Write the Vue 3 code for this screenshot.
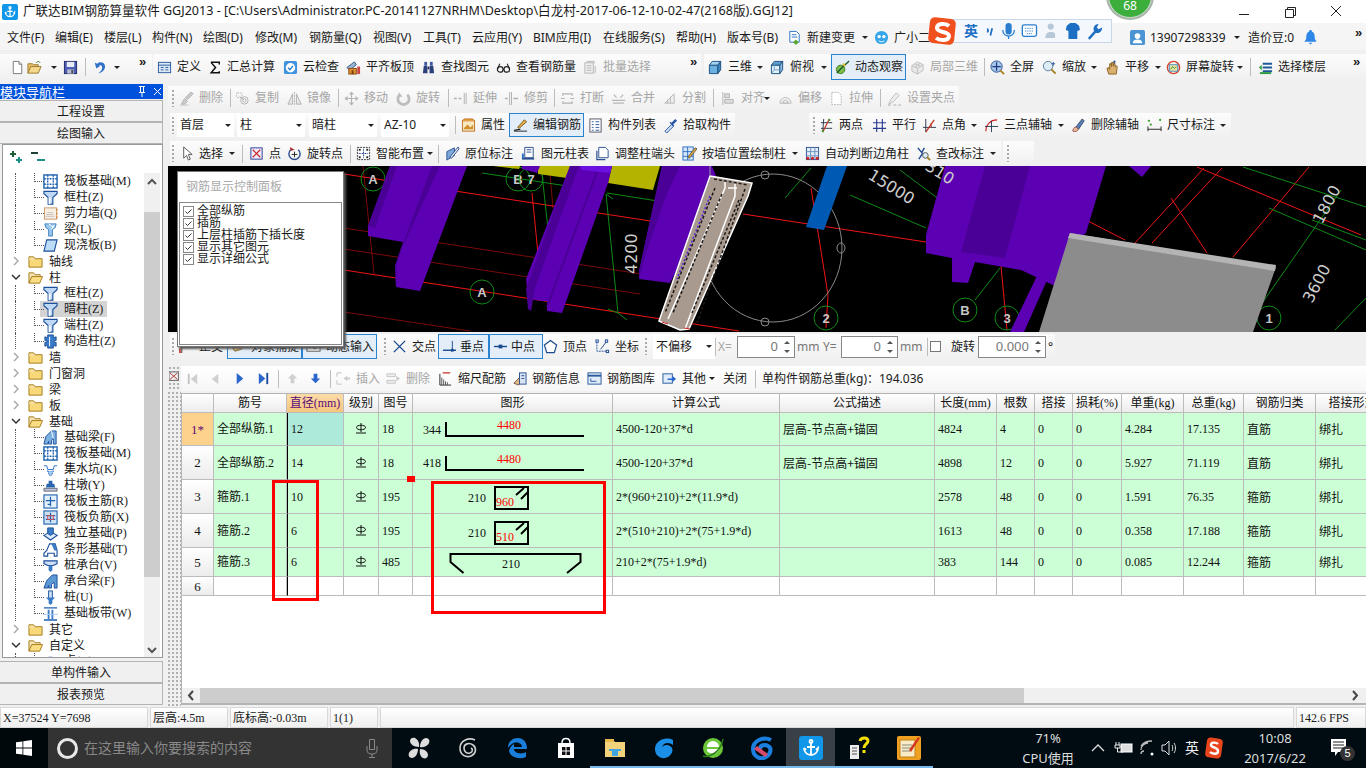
<script setup>
import { h } from 'vue'

// small icons, all drawn on a 16x16 box
const icons = {
  new: '<path d="M3.5 1.5h6l3 3v10h-9z" fill="#fff" stroke="#777"/><path d="M9.5 1.5v3h3" fill="#ddd" stroke="#777"/>',
  open: '<path d="M1 14V4h5l1 1h5v2" fill="#e8c068" stroke="#9a7a30"/><path d="M1 14l3-7h11l-3 7z" fill="#f4d98c" stroke="#9a7a30"/><path d="M10 3c1-2 3-2 4 0" fill="none" stroke="#3a7a30"/>',
  save: '<rect x="1.5" y="1.5" width="13" height="13" fill="#4a5cb4" stroke="#222a66"/><rect x="4" y="2" width="8" height="5.5" fill="#e8ecf8"/><rect x="4.5" y="10" width="7" height="4.5" fill="#b8bcd0"/><rect x="9" y="10.5" width="1.5" height="3.5" fill="#333"/>',
  undo: '<path d="M3 3l1.5 6L9 6 7 5.4c3-.8 5 1.6 3 5.6l-3 3.5c6-2 8-6 6.4-9.6C12 2 8 1.8 5.6 3.9z" fill="#2f72c8"/>',
  def: '<rect x="1.5" y="2.5" width="13" height="11" fill="#dbe8f6" stroke="#2a5a9c"/><path d="M1.5 5.5h13M4 8h3M4 10.5h3M9 8h3M9 10.5h3" stroke="#2a5a9c"/>',
  sum: '<path d="M3 2.5h9v2.4M12 12v1.5H3.4L8 8 3.4 2.8" fill="none" stroke="#111" stroke-width="1.6"/>',
  cloud: '<rect x="1" y="1" width="14" height="14" rx="2" fill="#3f93e0"/><circle cx="8" cy="8.3" r="5" fill="#fff"/><path d="M5.4 8.3l2 2 3.2-4" fill="none" stroke="#2a7acc" stroke-width="1.5"/>',
  flat: '<path d="M1 8l8-6 2 3-7 6z" fill="#9ab4d4" stroke="#36597f"/><rect x="3" y="9" width="8" height="6" fill="#e09030" stroke="#8a4a10"/><path d="M6 11h2v4H6z" fill="#7a3a10"/><rect x="12" y="7" width="3" height="8" fill="#c44"/>',
  find: '<path d="M2 14l1-8h3.600l.4 8zM9 14l.4-8H13l1 8z" fill="#2a3f7c"/><rect x="3.500" y="2" width="3" height="4" fill="#3f5aa0"/><rect x="9.500" y="2" width="3" height="4" fill="#3f5aa0"/><rect x="7" y="7" width="2" height="3" fill="#1c2a55"/>',
  view: '<circle cx="4.500" cy="10" r="3" fill="none" stroke="#222" stroke-width="1.3"/><circle cx="11.500" cy="10" r="3" fill="none" stroke="#222" stroke-width="1.3"/><path d="M7.500 10h1M2 9l2-5M14 9l-2-5" stroke="#222" stroke-width="1.100"/>',
  batch: '<rect x="2" y="3" width="9" height="11" fill="#eee" stroke="#b5b5b5"/><path d="M4 1.500h8v2M4 6h5M4 8.500h5M4 11h5M13 6v8" stroke="#b5b5b5" fill="none"/>',
  cube: '<path d="M1.500 5.500v9h9v-9z" fill="#6ab0e0" stroke="#1d4f80"/><path d="M1.500 5.500l3-4h9l-3 4z" fill="#a4d4f0" stroke="#1d4f80"/><path d="M10.500 5.500l3-4v9l-3 4z" fill="#3f88c4" stroke="#1d4f80"/>',
  cubet: '<path d="M1.500 5.500v9h9v-9z" fill="#e4f0f8" stroke="#1d4f80"/><path d="M1.500 5.500l3-4h9l-3 4z" fill="#5e9ccc" stroke="#1d4f80"/><path d="M10.500 5.500l3-4v9l-3 4z" fill="#8abde0" stroke="#1d4f80"/><path d="M4.500 1.500v9l-3 4M4.500 10.500h9" fill="none" stroke="#6a9cc4"/>',
  orbit: '<ellipse cx="6" cy="10" rx="4.500" ry="4.500" fill="#7cc04a" stroke="#3a7a20"/><path d="M2 14C6 9 10 6 15 1" stroke="#1c5a30" stroke-width="1.500"/><path d="M9 3l3 3-2 1-2-2z" fill="#e8c030"/>',
  local: '<path d="M2 6l6-4 6 3v6l-6 4-6-3z" fill="#e8e8e8" stroke="#c0c0c0"/><path d="M2 6l6 3 6-4M8 9v6M5 4l6 3M11 3.500L5 8" fill="none" stroke="#c0c0c0"/>',
  full: '<circle cx="7" cy="7" r="6" fill="#a8c8ec" stroke="#2a4f90"/><path d="M7 2.500v9M2.500 7h9" stroke="#1e3a80" stroke-width="1.300"/><path d="M11 11l4 4" stroke="#b08020" stroke-width="2"/>',
  zoom: '<circle cx="6.500" cy="6.500" r="5" fill="#dcecf8" stroke="#5a7a90"/><path d="M10 10l4.500 4.500" stroke="#a08020" stroke-width="2"/><path d="M12 2v4M10 4h4" stroke="#2a5aa0"/>',
  pan: '<path d="M4 15l-2-6 2-1 1 2V4l1.500 0 .5 3V2.500h1.500l.5 4V3.500h1.500l.5 4 1-1.500 1 1-1 8z" fill="#d8b070" stroke="#8a6020"/><path d="M10 .5v3M8.500 2h3" stroke="#2a4a90"/>',
  rot: '<circle cx="8" cy="8" r="6.500" fill="none" stroke="#d8402a" stroke-width="1.500"/><rect x="3.500" y="5" width="9" height="7" fill="#e8e0a0" stroke="#4a90c0"/><path d="M5 10l2-3 2 2 2-2" stroke="#3a9a3a" fill="none"/>',
  floors: '<path d="M5 4h10M5 8h10M5 12h10" stroke="#1d5a9c" stroke-width="2"/><path d="M1 8l3-3v6z" fill="#2a9a3a"/><path d="M2 14h12" stroke="#2a9a3a" stroke-width="2"/>',
  doc: '<path d="M3 1.500h7l3 3V13H3z" fill="#fff" stroke="#2a6fc4"/><path d="M5 5h5M5 7.500h6" stroke="#2a6fc4"/><path d="M9.500 10l3 3-3 3-3-3z" fill="#58a82a"/>',
  xiao: '<ellipse cx="8" cy="8" rx="7" ry="7" fill="#35a6e8"/><circle cx="5.500" cy="7" r="1.800" fill="#fff"/><circle cx="10.500" cy="7" r="1.800" fill="#fff"/><path d="M5 11.500c2 1.500 4 1.500 6 0" stroke="#fff" fill="none"/>',
  user: '<rect x="0" y="0" width="16" height="16" rx="2" fill="#4a94d4"/><circle cx="8" cy="6.500" r="3" fill="#fff"/><path d="M3 14c0-3 2-4 5-4s5 1 5 4z" fill="#fff"/>',
  bell: '<path d="M8 0c1 0 1.500.7 1.500 1.500C12 2.500 12.500 5 12.500 8c0 2 1 3 2 4.500H1.500c1-1.500 2-2.500 2-4.500 0-3 .5-5.500 3-6.500C6.500.7 7 0 8 0z" fill="#2d86e8"/><path d="M6 13.500h4L8 15.500z" fill="#2d86e8"/>',
  del: '<path d="M3 13l3-5 3 3-3 3H3zM7 7l6-6 2 2-6 6z" fill="#ccc" stroke="#b0b0b0"/><path d="M1 15h9" stroke="#c0c0c0"/>',
  copy: '<rect x="1.500" y="2" width="6" height="5" rx="1" fill="none" stroke="#b8b8b8" stroke-dasharray="2 1"/><circle cx="10" cy="10" r="4" fill="none" stroke="#b0b0b0"/><circle cx="10" cy="10" r="1.800" fill="none" stroke="#b0b0b0"/><path d="M5 6l4 3" stroke="#b0b0b0"/>',
  mirror: '<path d="M8 1v14" stroke="#b0b0b0" stroke-dasharray="2 1"/><path d="M6 3v11H1zM10 3v11h5z" fill="#e8e8e8" stroke="#b0b0b0"/>',
  move: '<path d="M8 1v14M1 8h14M8 1L6 4M8 1l2 3M8 15l-2-3M8 15l2-3M1 8l3-2M1 8l3 2M15 8l-3-2M15 8l-3 2" fill="none" stroke="#b4b4b4" stroke-width="1.200"/>',
  rotate: '<path d="M4 4a6 6 0 1 0 8 0" fill="none" stroke="#bdbdbd" stroke-width="3"/><path d="M3 1v5h4" fill="#bdbdbd"/>',
  extend: '<path d="M1 8h3M6 8h3" stroke="#b0b0b0" stroke-width="1.500"/><path d="M12 2v12M14 2v12" stroke="#b0b0b0"/>',
  trim: '<path d="M8 1v14M6 1v14" stroke="#b0b0b0"/><path d="M1 8h3M10 8h5" stroke="#b0b0b0" stroke-width="1.500"/>',
  brk: '<path d="M1 8h4M11 8h4M3 5V3h10v2M3 11v2h10v-2" fill="none" stroke="#b4b4b4" stroke-width="1.300"/>',
  merge: '<path d="M1 10h14M3 4l3 3M13 4l-3 3M2 13h12" fill="none" stroke="#b8b8b8" stroke-width="1.300"/>',
  split: '<path d="M3 13L13 3v10zM6 13V9M9 13V6" fill="#eee" stroke="#b8b8b8"/>',
  align: '<path d="M2 1v14" stroke="#b0b0b0"/><path d="M4 3h5v4H4zM4 9h9v4H4z" fill="#ddd" stroke="#b0b0b0"/>',
  offs: '<path d="M2 13a6 6 0 1 1 12 0zM5 13a3 3 0 1 1 6 0z" fill="#eee" stroke="#bbb"/>',
  stret: '<path d="M3 1.500h7l3 3v10H3z" fill="#fff" stroke="#b8b8b8" stroke-dasharray="2 1"/>',
  grp: '<path d="M2 14l2-5 6-7 3 3-7 7z" fill="#eee" stroke="#bbb"/><path d="M1 15h3M7 15h3M12 15h3" stroke="#aaa"/>',
  attr: '<rect x="1.500" y="3" width="13" height="11" fill="#f8e8c0" stroke="#c07020"/><path d="M1.500 3l2-2h9l2 2" fill="#e8a040" stroke="#c07020"/><path d="M3 11l4-4 3 3 3-3v5H3z" fill="#d09030"/>',
  edit: '<path d="M1 13c3 0 5-1 7-1" fill="none" stroke="#222" stroke-width="1.200"/><path d="M5 10L12 2l2.500 2-8 7z" fill="#e8b850" stroke="#7a5010"/><path d="M1 14h14" stroke="#222"/>',
  list: '<rect x="2" y="1" width="12" height="14" fill="#fff" stroke="#556"/><path d="M4 4h2M4 7h2M4 10h2M4 13h2M8 4h4M8 7h4M8 10h4M8 13h4" stroke="#2a5a9c"/>',
  pick: '<path d="M2 14l7-7 2 2-7 7z" fill="#cde" stroke="#2a5aa8"/><path d="M9 5l4-4 2 2-4 4 1 1-1 1-4-4 1-1z" fill="#2a5aa8"/>',
  two: '<path d="M2 5h12M2 11h12M5 1l-1 14" stroke="#2a3a50"/><path d="M11 1L4 15" stroke="#c03020" stroke-width="1.300"/><circle cx="11" cy="2" r="1.200" fill="#3aa030"/><circle cx="4" cy="14" r="1.200" fill="#3aa030"/>',
  para: '<path d="M1 5h14M1 11h14M5 1v14M11 1v14" stroke="#2a3a90" stroke-width="1.200"/>',
  ang: '<path d="M1 10h14M4 1v14" stroke="#2a3a50"/><path d="M13 2L4 15" stroke="#c03020" stroke-width="1.300"/><path d="M10 10c0-2-.5-3-1-4" stroke="#c03020" fill="none"/>',
  arc: '<path d="M2 14C2 7 7 2 14 2" fill="none" stroke="#d02020" stroke-width="1.200"/><path d="M1 9h14M8 3v12" stroke="#2a3a50"/>',
  eras: '<path d="M5 10l7-9 2 2-6 9z" fill="#5a80c0" stroke="#345"/><path d="M2 14c0-3 2-5 4-4l2 2c-1 2-3 3-6 2z" fill="#e8b898" stroke="#955"/>',
  dim: '<path d="M1 9v5M15 9v5M1 12h14" stroke="#222"/><circle cx="4" cy="7" r="1.200" fill="#3aa030"/><circle cx="14" cy="2" r="1.200" fill="#3aa030"/><circle cx="2" cy="3" r="1.200" fill="#3aa030"/>',
  cur: '<path d="M5 1l0 12 3-3 2 5 2-1-2-5h4z" fill="#fff" stroke="#555"/>',
  pt: '<rect x="2" y="2" width="12" height="12" fill="#eef" stroke="#2a3a90"/><path d="M4 4l8 8M12 4l-8 8" stroke="#d02020" stroke-width="1.300"/>',
  rotp: '<path d="M4 4a6 6 0 1 0 8 0" fill="none" stroke="#2a4a90" stroke-width="1.500"/><path d="M8 6v6M5 9h6" stroke="#222"/><path d="M3 1l1 4 4-1z" fill="#b02020"/>',
  smart: '<rect x="1.500" y="1.500" width="13" height="13" fill="#fff" stroke="#333" stroke-dasharray="2 1"/><path d="M8 3v10M3 8h10" stroke="#2a4a90" stroke-dasharray="2 1"/><rect x="3" y="3" width="2" height="2" fill="#222"/><rect x="11" y="3" width="2" height="2" fill="#222"/><rect x="3" y="11" width="2" height="2" fill="#222"/><rect x="11" y="11" width="2" height="2" fill="#222"/>',
  orig: '<path d="M2 6l8-4v8l-8 5z" fill="#7ca8dc" stroke="#2a4f90"/><path d="M5 12L14 1l1 2-8 10z" fill="#e8e8f0" stroke="#2a4f90"/>',
  tbl: '<path d="M4 1.500h9v11H4z" fill="#fff" stroke="#2a4f90"/><path d="M6 4h5M6 6.500h5" stroke="#2a4f90"/><path d="M1 13.500h13" stroke="#2a4f90" stroke-width="2"/><rect x="1" y="8" width="2" height="5" fill="#2a6fc4"/>',
  adj: '<path d="M4 1.500h7l3 3v8H4z" fill="#fff" stroke="#2a4f90"/><path d="M2 5v9.500h9" fill="none" stroke="#2a4f90" stroke-width="1.300"/>',
  wall: '<rect x="1" y="1" width="11" height="14" fill="#d8e8f8" stroke="#2a6fc4"/><path d="M1 6h11M1 11h11M6 1v14" stroke="#2a6fc4"/><path d="M6 12l8-10 2 1-8 10z" fill="#e0b040" stroke="#654"/>',
  auto: '<rect x="1.500" y="1.500" width="13" height="13" fill="#e4eef8" stroke="#2a4f90"/><path d="M6 1.500v13M10.500 1.500v13M1.500 6h13M1.500 10.500h13" stroke="#6a8fc0"/><circle cx="3" cy="13" r="1.600" fill="#d02020"/><circle cx="13" cy="13" r="1.600" fill="#d02020"/><circle cx="8" cy="13" r="1.600" fill="#d02020"/>',
  chg: '<path d="M2 2l5 6-4 6M9 2l-3 5" fill="none" stroke="#1e4a90" stroke-width="1.500"/><circle cx="10" cy="10" r="3" fill="#dcecf8" stroke="#555"/><path d="M12 12l3 3" stroke="#a08020" stroke-width="2"/>',
  ortho: '<path d="M3 15V2l5 5" fill="none" stroke="#555" stroke-width="1.200"/><rect x="0" y="10" width="2" height="5" fill="#c44"/>',
  obj: '<path d="M2 10l4-6h8l-3 7-7 2z" fill="#d8c080" stroke="#856020"/>',
  dyn: '<rect x="1" y="2" width="14" height="11" fill="#fff" stroke="#555"/><path d="M4 5v5M8 5h2v2H8v3h3" fill="none" stroke="#222"/>',
  cross: '<path d="M2 2l12 12M14 2L2 14" stroke="#1a4a90" stroke-width="1.500"/>',
  perp: '<path d="M1 12h14" stroke="#1a4a90" stroke-width="1.500"/><path d="M11 2v10" stroke="#1a4a90"/><rect x="9.500" y="10.500" width="3" height="3" fill="#1a4a90"/>',
  mid: '<path d="M1 8h14" stroke="#1a4a90" stroke-width="1.500"/><rect x="6" y="6" width="4" height="4" fill="#1a4a90"/>',
  vert: '<path d="M8 1.500l6.500 5-2.500 8H4l-2.500-8z" fill="#fff" stroke="#1a4a90" stroke-width="1.300"/>',
  coord: '<path d="M2 3v10h11" fill="none" stroke="#1a4a90" stroke-dasharray="2 1"/><rect x="1" y="1" width="2.500" height="2.500" fill="#fff" stroke="#1a4a90"/><rect x="12" y="12" width="2.500" height="2.500" fill="#fff" stroke="#1a4a90"/><path d="M6 11l6-8" stroke="#1a4a90"/><rect x="11" y="1" width="2.500" height="2.500" fill="#fff" stroke="#1a4a90"/>',
  first: '<path d="M4 3v11" stroke="#c4c4c4" stroke-width="2"/><path d="M13 3v11L6 8.500z" fill="#d0d0d0"/>',
  prev: '<path d="M11 3v11L4 8.500z" fill="#d0d0d0"/>',
  next: '<path d="M5 2v12l7-6z" fill="#2a66cc"/>',
  last: '<path d="M3 2v12l7-6z" fill="#2a66cc"/><path d="M12 2v12" stroke="#1a4aa0" stroke-width="2"/>',
  up: '<path d="M8 3l5 5h-3v5H6V8H3z" fill="#d0d0d0"/>',
  down: '<path d="M8 13l5-5h-3V3H6v5H3z" fill="#2a66cc"/>',
  ins: '<path d="M1 2h5M1 14h5M1 2v4M1 10v4" stroke="#c0c0c0" fill="none"/><path d="M8 8l4-3v2h3v2h-3v2z" fill="#ccc"/>',
  rem: '<path d="M1 3h9v3H1zM1 10h9v3H1z" fill="#eee" stroke="#c4c4c4"/><path d="M15 8l-4-3v6z" fill="#ccc"/>',
  scale: '<path d="M2 3v12h12" fill="none" stroke="#222"/><path d="M4 7v8M6 9v6M8 11v4M10 12v3" stroke="#555"/><path d="M5 2h8" stroke="#c03020" stroke-width="1.300"/>',
  info: '<path d="M2 13L9 6l3 3-5 6z" fill="#e0b880" stroke="#754"/><rect x="8" y="2" width="7" height="12" fill="#d8e4f4" stroke="#2a4f90"/><path d="M10 5h3M10 8h3" stroke="#2a4f90"/>',
  lib: '<rect x="1" y="2" width="14" height="12" fill="#e0ecf8" stroke="#2a5a9c"/><path d="M1 5h14" stroke="#2a5a9c" stroke-width="2"/><path d="M4 8v3h6" stroke="#2a5a9c" fill="none"/>',
  oth: '<rect x="1" y="3" width="10" height="10" fill="#e0ecf8" stroke="#2a5a9c"/><path d="M6 8h5V5l4 3.500-4 3.500V9.500H6z" fill="#2a66cc"/>',
  clo: '<rect x="0" y="1" width="10" height="9" fill="#eee" stroke="#666"/><path d="M1 2l8 7M9 2L1 9" stroke="#a33"/>',
  // tree nodes
  raft: '<rect x="1" y="1" width="14" height="14" fill="#fff" stroke="#1e62ae" stroke-width="1.500"/><path d="M5 1v14M11 1v14M1 5h14M1 11h14" stroke="#1e62ae" stroke-width="1.500" stroke-dasharray="2 1"/>',
  col: '<path d="M1 1.500h14v2.500L10.500 8v7h-5V8L1 4z" fill="#bcd8f4" stroke="#1c4f9c" stroke-width="1.200"/><path d="M6 8h2v7H6z" fill="#fff"/>',
  shear: '<rect x="1.500" y="2" width="13" height="12" fill="#f8efe4" stroke="#c89868"/><path d="M3 11h9M4 9h7M5 7h5" stroke="#999" stroke-dasharray="1 1"/><path d="M15 3v10" stroke="#e07020" stroke-dasharray="2 2"/>',
  beam: '<path d="M2 2h12l-1 4-3 2v7H6V8L3 6z" fill="#9cc8ec" stroke="#3a80c0"/><path d="M6 2l6 4M9 8l3-5" stroke="#fff"/>',
  slab: '<path d="M4 2h11l-3 12H1z" fill="#bcdcf8" stroke="#1c4f9c" stroke-width="1.200"/>',
  ccol: '<path d="M5 1h6v3l3-1v4h-2v2h2v4l-3-1v3H5v-3l-3 1V9h2V7H2V3l3 1z" fill="#3a7cc8" stroke="#1c4f9c"/><path d="M7 3v10" stroke="#fff"/>',
  fbeam: '<path d="M1 15l2-8 6-6h5v14h-3v-6l-2 2v4H6v-3l-1 3z" fill="#7cb0e0" stroke="#1c4f9c"/><path d="M9 1l2 8" stroke="#fff"/>',
  pit: '<path d="M1 4h3l1 4h6l1-4h3M5 9l2 5h2l2-5" fill="none" stroke="#2a6fc4"/><path d="M5 10h6l-2 4H7z" fill="#a8d0f0" stroke-dasharray="1 1" stroke="#2a6fc4"/>',
  pier: '<path d="M6 3h4v3h2l1 4H3l1-4h2z" fill="#2a66b0"/><path d="M1 11h14v3H1z" fill="#b8c8dc" stroke="#667"/>',
  main: '<rect x="1" y="1" width="14" height="14" fill="#e4f0fb" stroke="#1e62ae" stroke-width="1.200"/><path d="M3 7h10M8 3v10M5 11h3" stroke="#1e62ae" stroke-width="1.300"/>',
  neg: '<rect x="1" y="1" width="14" height="14" fill="#cfe2f6" stroke="#1e62ae" stroke-width="1.200"/><path d="M3 6h10M3 10h10M8 3v10" stroke="#1e62ae" stroke-width="1.300"/><rect x="5" y="6" width="6" height="4" fill="none" stroke="#e05050"/>',
  iso: '<path d="M1 10l7-4 7 4-7 5z" fill="#dbe9f8" stroke="#1c4f9c" stroke-width="1.200"/><path d="M5 2h6v6l-3 2-3-2z" fill="#3a7cc8" stroke="#1c4f9c"/>',
  strp: '<path d="M1 15v-3l3-3 3-7h6l2 7v6h-3v-3H5v3z" fill="#fff" stroke="#1c4f9c" stroke-width="1.200"/><path d="M9 2l3 7 3 0-2-7z" fill="#3a7cc8"/>',
  cap: '<path d="M1 3h14v3l-4 2H5L1 6z" fill="#cde0f5" stroke="#1c4f9c" stroke-width="1.200"/><path d="M6 8h4v5l-2 2-2-2z" fill="#3a7cc8"/>',
  cbeam: '<path d="M1 15l3-8 6-6h5v14h-3V9l-3 2v4H6v-3l-1 3z" fill="#5c98d4" stroke="#1c4f9c"/>',
  pile: '<rect x="6" y="1" width="4" height="8" fill="#cde0f5" stroke="#1c4f9c"/><path d="M3 8h10l-3 3v3l-2 2-2-2v-3z" fill="#3a7cc8"/>',
  plate: '<path d="M1 2h14M1 15h14" stroke="#1e62ae" stroke-width="1.500"/><path d="M5 4h2v10H5zM9 4h2v10H9z" fill="#3a7cc8"/><path d="M0 9h16" stroke="#a8c8ec"/>',
  dir: '<path d="M1 14V3h5l1.500 2H15v9z" fill="#f8d878" stroke="#a47a1c"/><path d="M1.500 4h4.500l1 2h-5.500z" fill="#f4e4b0"/>',
  diro: '<path d="M1 14V3h5l1.500 2H13v2" fill="#f4e4b0" stroke="#a47a1c"/><path d="M1 14l3-7h11.500l-3 7z" fill="#fbdd84" stroke="#a47a1c"/>'
}

// 24x24 taskbar and logo icons
const bigIcons = {
  pin: '<path d="M12 11C7 11 3 8 3 5s3-4 5-3 5 4 4 9zM13 11c0-5 3-9 6-9s4 3 3 5-4 5-9 4zM13 13c5 0 8 3 8 6s-3 4-5 3-4-4-3-9zM11 13c0 5-3 9-6 9s-4-3-3-5 4-5 9-4z" fill="#ddd"/>',
  swirl: '<path d="M19 4C12 1 4 5 4 12s6 10 11 8 6-8 2-11-9-1-9 3 3 6 6 5 3-4 1-5" fill="none" stroke="#cfcfcf" stroke-width="1.600"/>',
  edge: '<path d="M3 12C3 5 8 2 13 2c6 0 9 5 9 11H9c0 4 7 6 12 3v5c-7 3-16 0-17-6 1-4 3-6 5-7 0 0 0 2 0 3h8c0-4-6-6-10-3-2 1-3 3-4 4z" fill="#1a7fdb"/>',
  store: '<path d="M4 7h16v15H4z" fill="#fff"/><path d="M8 7c0-6 8-6 8 0" fill="none" stroke="#fff" stroke-width="1.500"/><path d="M8 11h3.500v3.500H8zM12.500 11H16v3.500h-3.500zM8 15.500h3.500V19H8zM12.500 15.500H16V19h-3.500z" fill="#111"/>',
  expl: '<path d="M2 4h8l2 2h10v15H2z" fill="#f3d27a"/><rect x="2" y="3" width="9" height="3" fill="#e8b84c"/><path d="M9 13h6v7H9z" fill="#3fa4e0"/><rect x="6" y="13" width="12" height="2" fill="#3fa4e0"/>',
  gcl: '<path d="M21 4C13 0 3 5 3 13s8 11 13 8 6-9 2-11c-3-2-8-1-8 3 0 2 2 4 4 3-4 0-5-5-2-8 3-2 7-1 9 1z" fill="#1b8fe8"/>',
  green: '<circle cx="12" cy="12" r="10" fill="#6cc83a"/><path d="M6 11a6 6 0 0 1 12 0zM6 13h12c-1 5-9 6-12 2" fill="#fff"/><path d="M2 20C8 22 20 16 22 3" fill="none" stroke="#2a7a18" stroke-width="1.500"/>',
  gcr: '<path d="M21 4C13 0 3 5 3 13s8 11 13 8 6-9 2-11c-3-2-8-1-8 3" fill="none" stroke="#1b7fe0" stroke-width="4"/><path d="M4 13l11 8 3-3-11-8z" fill="#d84a6a"/>',
  app: '<rect x="0" y="0" width="24" height="24" rx="3" fill="#1197ea"/><path d="M12 4c-2 0-2 3 0 3s2-3 0-3zM12 7v12M5 12c0 5 4 7 7 7s7-2 7-7l-2 2M5 12l2 2M8 11h8" fill="none" stroke="#fff" stroke-width="1.800"/>',
  help: '<rect x="2" y="9" width="9" height="14" fill="#ececec"/><path d="M4 12h5M4 15h5M4 18h5" stroke="#555"/><path d="M12 5c1-4 8-4 8 0 0 3-4 3-4 7" fill="none" stroke="#f8e000" stroke-width="3"/><rect x="14.500" y="14" width="3" height="3" fill="#f8e000"/>',
  note: '<rect x="0" y="0" width="24" height="24" rx="2" fill="#f0a020"/><rect x="3" y="4" width="15" height="17" fill="#f8ecc8" stroke="#c08010"/><path d="M5 9h10M5 12h10M5 15h8" stroke="#887"/><path d="M12 14L21 1l2 1-9 14z" fill="#d03820"/>'
}

// toolbar items carry the x of their left edge, widths come from the next item
const I = (x, i, t, o = {}) => ({ k: 'it', x, i, t, ...o })
const T = (x, t, o = {}) => ({ k: 'it', x, t, ...o })
const A = (x) => ({ k: 'ar', x })
const S = (x) => ({ k: 'sep', x })
const G = (x) => ({ k: 'grip', x })
const M = (x) => ({ k: 'more', x })
const B = (x) => ({ k: 'sp', x })
const Sel = (x, t) => ({ k: 'sel', x, t })
const Inp = (x, t) => ({ k: 'inp', x, t })
const Chk = (x) => ({ k: 'chk', x })

const band = (x0, x1, items, cls = '') => ({
  x0,
  x1,
  cls,
  pad: items[0].x - x0,
  items: items.map((it, n) => ({ ...it, w: (n + 1 < items.length ? items[n + 1].x : x1) - it.x }))
})

const row = (cls, base, bands) => {
  let at = base
  const out = bands.map((b) => {
    const ml = b.x0 - at
    at = b.x1
    return { ...b, ml, w: b.x1 - b.x0 }
  })
  return { cls, bands: out }
}

const off = { off: 1 }

const menuRow = row('r-menu', 0, [band(0, 1366, [
  T(7, '文件(F)'), T(55, '编辑(E)'), T(104, '楼层(L)'), T(152, '构件(N)'), T(203, '绘图(D)'), T(255, '修改(M)'),
  T(309, '钢筋量(Q)'), T(373, '视图(V)'), T(423, '工具(T)'), T(472, '云应用(Y)'), T(533, 'BIM应用(I)'), T(603, '在线服务(S)'),
  T(676, '帮助(H)'), T(727, '版本号(B)'), I(787, 'doc', '新建变更'), A(862), I(874, 'xiao', '广小二'), B(930),
  I(1130, 'user', '13907298339'), A(1234), T(1248, '造价豆:0'), I(1303, 'bell', ''), M(1355)
])])

const row1 = row('r-1', 0, [
  band(0, 152, [I(10, 'new', ''), I(27, 'open', ''), A(51), I(63, 'save', ''), S(85), I(92, 'undo', ''), A(114), M(139)]),
  band(153, 701, [
    I(157, 'def', '定义'), I(208, 'sum', '汇总计算', { g: 4 }), I(283, 'cloud', '云检查'), I(346, 'flat', '平齐板顶'),
    I(421, 'find', '查找图元'), I(496, 'view', '查看钢筋量'), I(583, 'batch', '批量选择', off), M(690)
  ]),
  band(704, 1366, [
    I(708, 'cube', '三维'), A(757), I(770, 'cubet', '俯视'), A(821), I(831, 'orbit', '动态观察', { on: 1 }), B(906),
    I(910, 'local', '局部三维', off), S(984), I(990, 'full', '全屏'), I(1042, 'zoom', '缩放'), A(1091), I(1105, 'pan', '平移'),
    A(1155), I(1166, 'rot', '屏幕旋转'), A(1237), S(1250), I(1258, 'floors', '选择楼层'), M(1353)
  ])
])

const row2 = row('r-2', 163, [band(168, 959, [
  G(172), I(179, 'del', '删除', off), S(230), I(235, 'copy', '复制', off), I(287, 'mirror', '镜像', off), S(338),
  I(344, 'move', '移动', off), I(396, 'rotate', '旋转', off), S(448), I(453, 'extend', '延伸', off), I(504, 'trim', '修剪', off), S(554),
  I(560, 'brk', '打断', off), I(611, 'merge', '合并', off), I(662, 'split', '分割', off), S(713), I(721, 'align', '对齐', off), A(764),
  I(778, 'offs', '偏移', off), I(829, 'stret', '拉伸', off), S(880), I(887, 'grp', '设置夹点', off)
])])

const row3 = row('r-3', 163, [
  band(170, 735, [
    G(172), Sel(177, '首层'), B(234), Sel(237, '柱'), B(305), Sel(309, '暗柱'), B(377), Sel(381, 'AZ-10'), B(449), S(455),
    I(461, 'attr', '属性'), I(509, 'edit', '编辑钢筋', { on: 1 }), B(584), I(588, 'list', '构件列表'), I(663, 'pick', '拾取构件')
  ]),
  band(809, 1231, [
    G(813), I(819, 'two', '两点'), I(872, 'para', '平行'), I(922, 'ang', '点角'), A(971), I(984, 'arc', '三点辅轴'), A(1058),
    I(1071, 'eras', '删除辅轴'), I(1147, 'dim', '尺寸标注'), A(1220)
  ])
])

const row4 = row('r-4', 163, [
  band(170, 1001, [
    G(172), I(179, 'cur', '选择'), A(229), S(242), I(249, 'pt', '点'), I(287, 'rotp', '旋转点'), S(350), I(356, 'smart', '智能布置'),
    A(427), S(438), I(445, 'orig', '原位标注'), I(521, 'tbl', '图元柱表'), I(595, 'adj', '调整柱端头'), I(682, 'wall', '按墙位置绘制柱'),
    A(792), I(805, 'auto', '自动判断边角柱'), I(916, 'chg', '查改标注'), A(990)
  ]),
  band(1003, 1034, [G(1007)])
])

const snapRow = row('r-snap', 163, [band(170, 1055, [
  G(172), I(179, 'ortho', '正交'), I(227, 'obj', '对象捕捉', { on: 1 }), I(302, 'dyn', '动态输入', { on: 1 }), B(377), G(384),
  I(392, 'cross', '交点'), I(438, 'perp', '垂点', { on: 1, g: 3 }), I(489, 'mid', '中点', { on: 1, g: 3 }), I(543, 'vert', '顶点'), I(595, 'coord', '坐标'),
  G(645), Sel(653, '不偏移'), S(715), T(718, 'X=', off), Inp(737, '0'), T(797, 'mm', { dim: 1 }), T(823, 'Y=', { dim: 1 }), Inp(841, '0'),
  T(900, 'mm', { dim: 1 }), S(927), Chk(930), T(951, '旋转'), Inp(978, '0.000'), T(1048, '°')
])])

const gridBar = row('r-grid', 163, [
  band(168, 181, [I(169, 'clo', '')], 'dots'),
  band(181, 1366, [
    I(185, 'first', ''), I(208, 'prev', ''), I(232, 'next', ''), I(256, 'last', ''), S(278), I(285, 'up', ''), I(308, 'down', ''), S(330),
    I(336, 'ins', '插入', off), I(386, 'rem', '删除', off), I(438, 'scale', '缩尺配筋'), I(512, 'info', '钢筋信息'), I(587, 'lib', '钢筋图库'),
    I(662, 'oth', '其他'), A(709), T(723, '关闭'), S(755), T(762, '单构件钢筋总重(kg)：194.036')
  ])
])

const svgIcon = (name, cls = 'ic') => h('svg', { class: cls, viewBox: '0 0 16 16', innerHTML: icons[name] })

const renderItem = (it) => {
  const style = { width: `${it.w}px` }
  if (it.k === 'ar') return h('div', { class: 'tb-cell', style }, [h('i', { class: 'tb-tri' })])
  if (it.k === 'sep') return h('div', { class: 'tb-cell', style }, [h('i', { class: 'tb-sep' })])
  if (it.k === 'grip') return h('div', { class: 'tb-cell', style }, [h('i', { class: 'tb-grip' })])
  if (it.k === 'sp') return h('div', { class: 'tb-cell', style })
  if (it.k === 'more') return h('div', { class: 'tb-more', style }, '»')
  if (it.k === 'sel') {
    return h('div', { class: 'tb-sel', style }, [h('span', it.t), h('i', { class: 'tb-tri' })])
  }
  if (it.k === 'inp') {
    return h('div', { class: 'tb-cell', style }, [
      h('div', { class: 'tb-inp' }, [h('span', it.t), h('b', { class: 'tb-spin' }, [h('i'), h('i')])])
    ])
  }
  if (it.k === 'chk') return h('div', { class: 'tb-cell', style }, [h('i', { class: 'tb-chk' })])
  const kids = []
  if (it.i) kids.push(svgIcon(it.i, 'tb-ic'))
  if (it.t) kids.push(h('span', { class: 'tb-txt', style: it.g ? { marginLeft: `${it.g}px` } : null }, it.t))
  return h('div', { class: ['tb-item', { on: it.on, off: it.off, dim: it.dim }], style }, kids)
}

const ToolRow = (p) => h('div', { class: ['tb-row', p.row.cls] }, p.row.bands.map((b) =>
  h('div', {
    class: ['tb-band', b.cls],
    style: { marginLeft: `${b.ml}px`, width: `${b.w}px`, paddingLeft: `${b.pad}px` }
  }, b.items.map(renderItem))
))
ToolRow.props = ['row']

const treeRows = [
  [2, '筏板基础(M)', 'raft'], [2, '框柱(Z)', 'col'], [2, '剪力墙(Q)', 'shear'], [2, '梁(L)', 'beam'], [2, '现浇板(B)', 'slab'],
  [1, '轴线', 'dir'], [1, '柱', 'diro'], [2, '框柱(Z)', 'col'], [2, '暗柱(Z)', 'col', 'sel'], [2, '端柱(Z)', 'col'], [2, '构造柱(Z)', 'ccol'],
  [1, '墙', 'dir'], [1, '门窗洞', 'dir'], [1, '梁', 'dir'], [1, '板', 'dir'], [1, '基础', 'diro'],
  [2, '基础梁(F)', 'fbeam'], [2, '筏板基础(M)', 'raft'], [2, '集水坑(K)', 'pit'], [2, '柱墩(Y)', 'pier'], [2, '筏板主筋(R)', 'main'],
  [2, '筏板负筋(X)', 'neg'], [2, '独立基础(P)', 'iso'], [2, '条形基础(T)', 'strp'], [2, '桩承台(V)', 'cap'], [2, '承台梁(F)', 'cbeam'],
  [2, '桩(U)', 'pile'], [2, '基础板带(W)', 'plate'], [1, '其它', 'dir'], [1, '自定义', 'diro'], [2, '点(D)', 'pier']
].map(([level, text, icon, sel]) => ({ level, text, icon, sel, open: icon === 'diro' }))

const panelRows = ['全部纵筋', '插筋', '上层柱插筋下插长度', '显示其它图元', '显示详细公式']

const headers = ['', '筋号', '直径(mm)', '级别', '图号', '图形', '计算公式', '公式描述', '长度(mm)', '根数', '搭接', '损耗(%)', '单重(kg)', '总重(kg)', '钢筋归类', '搭接形式']
const tableRows = [
  { no: '1*', name: '全部纵筋.1', d: '12', fig: '18', calc: '4500-120+37*d', desc: '层高-节点高+锚固', len: '4824', n: '4', lap: '0', loss: '0', unit: '4.284', total: '17.135', kind: '直筋', join: '绑扎' },
  { no: '2', name: '全部纵筋.2', d: '14', fig: '18', calc: '4500-120+37*d', desc: '层高-节点高+锚固', len: '4898', n: '12', lap: '0', loss: '0', unit: '5.927', total: '71.119', kind: '直筋', join: '绑扎' },
  { no: '3', name: '箍筋.1', d: '10', fig: '195', calc: '2*(960+210)+2*(11.9*d)', desc: '', len: '2578', n: '48', lap: '0', loss: '0', unit: '1.591', total: '76.35', kind: '箍筋', join: '绑扎' },
  { no: '4', name: '箍筋.2', d: '6', fig: '195', calc: '2*(510+210)+2*(75+1.9*d)', desc: '', len: '1613', n: '48', lap: '0', loss: '0', unit: '0.358', total: '17.188', kind: '箍筋', join: '绑扎' },
  { no: '5', name: '箍筋.3', d: '6', fig: '485', calc: '210+2*(75+1.9*d)', desc: '', len: '383', n: '144', lap: '0', loss: '0', unit: '0.085', total: '12.244', kind: '箍筋', join: '绑扎' }
]
const tail = ['len', 'n', 'lap', 'loss', 'unit', 'total']

const statusCells = [
  { t: 'X=37524 Y=7698', w: 148 },
  { t: '层高:4.5m', w: 78 },
  { t: '底标高:-0.03m', w: 98 },
  { t: '1(1)', w: 48 },
  { t: '', w: 914 },
  { t: '142.6 FPS', w: 70 }
]

const taskApps = [
  { i: 'pin' }, { i: 'swirl' }, { i: 'edge' }, { i: 'store' }, { i: 'expl', run: 1 }, { i: 'gcl', run: 1 },
  { i: 'green', run: 1 }, { i: 'gcr', run: 1 }, { i: 'app', run: 1, act: 1 }, { i: 'help', run: 1 }, { i: 'note', run: 1 }
]

const redLines = [
  [344, 174, 657, 222], [743, 214, 926, 242], [344, 270, 739, 331], [532, 193, 538, 254],
  [811, 188, 828, 295], [828, 295, 826, 328], [1197, 167, 1361, 235], [1204, 168, 1135, 243], [1222, 168, 1152, 243],
  [1309, 167, 1233, 257], [1086, 220, 1125, 240], [1171, 198, 1207, 253], [1001, 266, 1007, 330]
]
const darkLines = [
  [344, 228, 667, 278], [344, 249, 640, 294], [344, 312, 470, 331], [363, 166, 374, 274], [550, 174, 553, 208]
]
const greenLines = [
  [482, 173, 567, 186], [607, 193, 664, 202], [606, 194, 618, 313], [618, 313, 627, 320], [608, 309, 618, 313], [606, 194, 613, 199], [542, 174, 548, 229],
  [811, 168, 785, 198], [850, 195, 926, 228], [900, 170, 940, 200],
  [1243, 167, 1366, 207], [1269, 208, 1366, 250], [1341, 190, 1256, 312], [1366, 298, 1335, 330], [1000, 268, 975, 300], [1312, 220, 1366, 240]
]
const axisMarks = [
  { x: 373, y: 179, t: 'A' }, { x: 518, y: 179, t: 'B' }, { x: 531, y: 179, t: '7' }, { x: 482, y: 292, t: 'A' },
  { x: 826, y: 318, t: '2' }, { x: 965, y: 310, t: 'B' }, { x: 1007, y: 318, t: '3' }, { x: 1269, y: 318, t: '1' }
]
</script>

<template>
  <div class="app">
    <div class="title">
      <svg class="logo" viewBox="0 0 24 24" v-html="bigIcons.app"></svg>
      <span class="title-txt">广联达BIM钢筋算量软件 GGJ2013 - [C:\Users\Administrator.PC-20141127NRHM\Desktop\白龙村-2017-06-12-10-02-47(2168版).GGJ12]</span>
      <div class="winbtns">
        <svg viewBox="0 0 46 23"><path d="M18 14.500h10" stroke="#222" /></svg>
        <svg viewBox="0 0 46 23"><path d="M18.500 9.500h8v8h-8zM20.500 9.500v-2h8v8h-2" fill="none" stroke="#222" /></svg>
        <svg viewBox="0 0 46 23"><path d="M18 6l10 10M28 6L18 16" stroke="#222" /></svg>
      </div>
    </div>
    <ToolRow :row="menuRow" />
    <ToolRow :row="row1" />

    <div class="main">
      <div class="side">
        <div class="side-head">
          <span>模块导航栏</span>
          <svg viewBox="0 0 26 15"><path d="M3 2.500h6M4.500 3v5M7.500 3v5M3 8.500h6M6 9v4M18 4l7 7M25 4l-7 7" stroke="#fff" fill="none" /></svg>
        </div>
        <div class="side-btn">工程设置</div>
        <div class="side-btn">绘图输入</div>
        <div class="tree">
          <div class="tree-tools">
            <svg viewBox="0 0 40 18">
              <path d="M3 5h6M6 2v6" stroke="#1d5f36" stroke-width="2" />
              <path d="M9 11h6M12 8v6" stroke="#1d8f86" stroke-width="2" />
              <path d="M24 4h7" stroke="#1d3f36" stroke-width="2" />
              <path d="M30 11h8" stroke="#1d8f86" stroke-width="2" />
            </svg>
          </div>
          <div class="tree-body">
            <div class="tree-list">
              <div v-for="(r, n) in treeRows" :key="n" class="node" :class="'l' + r.level">
                <svg v-if="r.level === 1" class="chev" viewBox="0 0 10 10">
                  <path :d="r.open ? 'M1 3l4 4 4-4' : 'M3 1l4 4-4 4'" fill="none" :stroke="r.open ? '#333' : '#aaa'" stroke-width="1.500" />
                </svg>
                <div class="node-in" :class="{ sel: r.sel }">
                  <svg class="node-ic" viewBox="0 0 16 16" v-html="icons[r.icon]"></svg>
                  <span class="node-txt">{{ r.text }}</span>
                </div>
              </div>
            </div>
            <div class="tree-scroll">
              <svg viewBox="0 0 16 12"><path d="M4 8l4-4 4 4" fill="none" stroke="#555" stroke-width="2" /></svg>
              <div class="tree-thumb"></div>
              <svg class="down" viewBox="0 0 16 12"><path d="M4 4l4 4 4-4" fill="none" stroke="#555" stroke-width="2" /></svg>
            </div>
          </div>
        </div>
        <div class="side-btn gap">单构件输入</div>
        <div class="side-btn">报表预览</div>
      </div>

      <div class="work">
        <ToolRow :row="row2" />
        <ToolRow :row="row3" />
        <ToolRow :row="row4" />

        <svg class="scene" viewBox="168 166 1198 166">
          <rect x="168" y="166" width="1198" height="166" fill="#000" />
          <line v-for="(l, n) in darkLines" :key="'d' + n" :x1="l[0]" :y1="l[1]" :x2="l[2]" :y2="l[3]" stroke="#7a0a0a" />
          <line v-for="(l, n) in redLines" :key="'r' + n" :x1="l[0]" :y1="l[1]" :x2="l[2]" :y2="l[3]" stroke="#f01414" />
          <line v-for="(l, n) in greenLines" :key="'g' + n" :x1="l[0]" :y1="l[1]" :x2="l[2]" :y2="l[3]" stroke="#0e8a16" />
          <ellipse cx="773" cy="248" rx="69" ry="74" fill="none" stroke="#8a8a8a" />
          <ellipse cx="765" cy="175" rx="4" ry="4" fill="none" stroke="#8a8a8a" />
          <ellipse cx="841" cy="248" rx="4" ry="5" fill="none" stroke="#8a8a8a" />
          <ellipse cx="765" cy="322" rx="4" ry="4" fill="none" stroke="#8a8a8a" />
          <g v-for="m in axisMarks" :key="m.x">
            <circle :cx="m.x" :cy="m.y" r="12" fill="none" stroke="#0e8a16" />
            <text :x="m.x" :y="m.y + 5" class="scene-t" text-anchor="middle">{{ m.t }}</text>
          </g>

          <path d="M493 166h27l-1 3z" fill="#b3b300" />
          <path d="M538 166h34l-5 12-29-4z" fill="#b3b300" />
          <path d="M612 166h48l-7 24-45-7z" fill="#b3b300" />
          <path d="M522 166h18l-3 7-15-4z" fill="#5c00b4" />

          <path d="M390 166h77l-47 125-24-4-1-21 8-24-35-6v-10z" fill="#5c00b4" />
          <path d="M432 166h8l-37 80-6 17-1 24-1-21 7-20z" fill="#4a0096" />
          <path d="M390 166h7l-22 62-7-2z" fill="#4a0096" />
          <path d="M570 166h42l-4 17-46 130-15-2v-10l-4 0-15-2-2-20z" fill="#5c00b4" />
          <path d="M570 166h9l-44 122 -4 23-3-2-2-20z" fill="#4a0096" />
          <path d="M597 172l-50 135" stroke="#4a0096" stroke-width="2" />
          <path d="M580 166h32l-2 7-28-3z" fill="#6a10e0" />

          <path d="M662 166h50l8 20-50 97-31-4v-8z" fill="#5c00b4" />
          <path d="M662 166h18l-14 30-20 57-7 26v-8z" fill="#4a0096" />
          <path d="M827 166h20l-23 64-18-3z" fill="#0059b3" />
          <path d="M945 166h161l-20 67-10 8-6 52-49-23-46-8-7 21-16-1v-24l-26-5v-18z" fill="#5c00b4" />
          <path d="M985 166h45l-25 92-44-6z" fill="#4a0096" />
          <path d="M1060 228l8 5-44 99h-14z" fill="#5c00b4" />
          <path d="M1129 166h22l-9 11z" fill="#5c00b4" />

          <path d="M1070 233l206 34-23 65H1039z" fill="#8c8c8c" />
          <path d="M1070 233l206 32-1 6-207-33z" fill="#b4b4b4" />

          <path d="M710 176l42 7-4 13-59 133-9 1-21-9z" fill="#a89a8e" stroke="#fff" stroke-width="1.500" />
          <path d="M710 166v10" stroke="#999" />
          <g fill="none" stroke="#fff" stroke-width="1.500">
            <path d="M725 181v7L668 319" />
            <path d="M735 182v14L685 329" />
            <path d="M728 188h9" />
          </g>
          <g fill="none" stroke="#1e1a18" stroke-width="1.500" stroke-dasharray="3 2">
            <path d="M715 188L665 313" />
            <path d="M722 194L673 313" />
            <path d="M739 200L692 313" />
            <path d="M745 189L697 323" />
            <path d="M714 179l34 6" />
          </g>
          <path d="M710 196L677 279" stroke="#5a20d0" stroke-width="1.500" stroke-dasharray="2 2" />
          <path d="M662 322l6 2M684 328l6 1" stroke="#d02020" />

          <text class="scene-n" transform="translate(637 274) rotate(-90)">4200</text>
          <text class="scene-n" transform="translate(867 178) rotate(32)">15000</text>
          <text class="scene-n" transform="translate(924 169) rotate(32)">310</text>
          <text class="scene-n" transform="translate(1322 225) rotate(-62)">1800</text>
          <text class="scene-n" transform="translate(1312 304) rotate(-62)">3600</text>
        </svg>

        <ToolRow :row="snapRow" />
        <ToolRow :row="gridBar" />

        <div class="lower">
          <div class="dots"></div>
          <div class="frame">
            <div class="table">
              <div v-for="(c, n) in headers" :key="'h' + n" class="cell head" :class="{ hot: n === 2 }">{{ c }}</div>
              <template v-for="(r, n) in tableRows" :key="r.no">
                <div class="cell head rowno" :class="{ cur: n === 0 }">{{ r.no }}</div>
                <div class="cell g">{{ r.name }}</div>
                <div class="cell g line" :class="{ picked: n === 0 }">{{ r.d }}</div>
                <div class="cell g mid">
                  <svg width="12" height="12" viewBox="0 0 12 12"><path d="M1.500 4.500c0-3 9-3 9 0s-9 3-9 0zM6 0v9M1 10h10" fill="none" stroke="#111" /></svg>
                </div>
                <div class="cell g">{{ r.fig }}</div>
                <div class="cell g"></div>
                <div class="cell g">{{ r.calc }}</div>
                <div class="cell g cjk">{{ r.desc }}</div>
                <div v-for="key in tail" :key="key" class="cell g">{{ r[key] }}</div>
                <div class="cell g cjk">{{ r.kind }}</div>
                <div class="cell g cjk">{{ r.join }}</div>
              </template>
              <div class="cell head rowno">6</div>
              <div v-for="n in 15" :key="'e' + n" class="cell" :class="{ line: n === 2 }"></div>

              <svg class="shapes" viewBox="413 413 200 183">
                <g fill="none" stroke="#000" stroke-width="2">
                  <path d="M446 422v14h138" />
                  <path d="M446 456v14h138" />
                  <path d="M495 487h33v22h-33zM516 495l8-7M521 499l7-7" />
                  <path d="M495 522h33v22h-33zM516 530l8-7M521 534l7-7" />
                  <path d="M463.500 573l-13-11v-8h130v8l-13.500 11" />
                </g>
                <g class="fig-t">
                  <text x="423" y="434">344</text>
                  <text x="423" y="467">418</text>
                  <text x="468" y="502">210</text>
                  <text x="468" y="537">210</text>
                  <text x="502" y="568">210</text>
                </g>
                <g class="fig-t red">
                  <text x="497" y="429">4480</text>
                  <text x="497" y="463">4480</text>
                  <text x="496" y="506">960</text>
                  <text x="496" y="541">510</text>
                </g>
              </svg>

              <i class="mark m1"></i>
              <i class="mark m2"></i>
              <i class="dot-red"></i>
            </div>
            <div class="hscroll">
              <svg class="sc-arrow" viewBox="0 0 18 15"><path d="M11 3l-4 4.500 4 4.500" fill="none" stroke="#444" stroke-width="2" /></svg>
              <div class="sc-thumb"></div>
              <svg class="sc-arrow end" viewBox="0 0 18 15"><path d="M7 3l4 4.500-4 4.500" fill="none" stroke="#444" stroke-width="2" /></svg>
            </div>
          </div>
        </div>
      </div>
    </div>

    <div class="status">
      <div v-for="(c, n) in statusCells" :key="n" class="st" :style="{ width: c.w + 'px' }">{{ c.t }}</div>
    </div>

    <div class="taskbar">
      <div class="start">
        <svg width="16" height="16" viewBox="0 0 16 16"><path d="M0 2.300l6.500-.9v6.200H0zM7.300 1.300L16 0v7.600H7.300zM0 8.400h6.500v6.200L0 13.700zM7.300 8.400H16V16l-8.700-1.300z" fill="#fff" /></svg>
      </div>
      <div class="search">
        <i class="cortana"></i>
        <span>在这里输入你要搜索的内容</span>
        <svg class="mic" width="12" height="20" viewBox="0 0 12 20"><path d="M3.500 1.500h5v10h-5zM1 8v4c0 3 2 4 5 4s5-1 5-4V8M6 16v3M3 19.500h6" fill="none" stroke="#888" /></svg>
      </div>
      <div class="apps">
        <div v-for="a in taskApps" :key="a.i" class="tk" :class="{ run: a.run, act: a.act }">
          <svg width="24" height="24" viewBox="0 0 24 24" v-html="bigIcons[a.i]"></svg>
        </div>
      </div>
      <div class="tray">
        <div class="cpu"><span>71%</span><span>CPU使用</span></div>
        <svg class="tr" width="26" height="16" viewBox="0 0 26 16"><path d="M7 11l6-6 6 6" fill="none" stroke="#ddd" stroke-width="1.300" /></svg>
        <svg class="tr" width="24" height="16" viewBox="0 0 24 16"><path d="M5 2v3M8 2v3M4 5h5v3H4zM6.500 8v4h6" fill="none" stroke="#eee" /><rect x="10" y="4" width="11" height="8" fill="#ddd" stroke="#fff" /></svg>
        <svg class="tr" width="24" height="18" viewBox="0 0 24 18"><path d="M6 15a3 3 0 0 1 3-3M6 11a7 7 0 0 1 7-7M6 7c2-3 6-5 11-5" fill="none" stroke="#bbb" stroke-width="1.300" /><circle cx="17" cy="15" r="1.500" fill="#fff" /></svg>
        <svg class="tr" width="20" height="18" viewBox="0 0 20 18"><path d="M3 6h3l4-4v14l-4-4H3z" fill="none" stroke="#ddd" /><path d="M13 6c1 2 1 4 0 6M15 4c2 3 2 7 0 10" fill="none" stroke="#ddd" /></svg>
        <span class="ying">英</span>
        <svg class="tr" width="22" height="22" viewBox="0 0 22 22"><rect x="3" y="1" width="16" height="20" rx="4" fill="#e8451c" transform="rotate(8 11 11)" /><path d="M15 7c-2-2-7-2-7 1s7 2 7 6-6 3-8 1" fill="none" stroke="#fff" stroke-width="2.400" /></svg>
        <div class="clock"><span>10:08</span><span>2017/6/22</span></div>
        <div class="notif">
          <svg width="18" height="20" viewBox="0 0 18 20"><path d="M1 1h15v13H8l-3 4v-4H1z" fill="#fff" /><path d="M3 4h11M3 7h11M3 10h11" stroke="#222" /></svg>
          <b>5</b>
        </div>
      </div>
    </div>

    <div class="badge">68</div>

    <div class="sogou">
      <svg class="sg-s" viewBox="0 0 28 28"><rect x="1" y="1" width="26" height="26" rx="5" fill="#f0501e" transform="rotate(6 14 14)" /><path d="M21 9c-3-3-12-3-12 2s12 3 12 8-9 5-13 2" fill="none" stroke="#fff" stroke-width="4" /></svg>
      <b class="sg-y">英</b>
      <svg viewBox="0 0 150 20" class="sg-ic">
        <path d="M10 8c2 0 2 3 0 3M16 7l-2 8" stroke="#1d6fc4" stroke-width="2" fill="none" />
        <rect x="31" y="1" width="7" height="13" rx="3.500" fill="#2a7ed0" />
        <path d="M28 9c0 9 13 9 13 0M34.500 15v4" fill="none" stroke="#2a7ed0" stroke-width="1.500" />
        <rect x="50" y="3" width="16" height="13" rx="2" fill="#fff" stroke="#2a7ed0" stroke-width="1.500" />
        <path d="M53 7h10M53 10h10M55 13h6" stroke="#2a7ed0" stroke-dasharray="1.500 1" />
        <circle cx="82" cy="5" r="3.500" fill="#b8c8d8" />
        <path d="M76 18c0-5 2-7 6-7s5 1 5 3v4z" fill="#b8c8d8" />
        <path d="M100 4l4-3h6l4 3 1 5-3 1v9h-10v-9l-3-1z" fill="#1d6fc4" />
        <path d="M124 18l7-8c-2-4 1-8 5-8l-2 4 2 2 4-2c0 5-4 7-7 6l-7 8z" fill="#1d6fc4" />
      </svg>
    </div>

    <div class="panel">
      <div class="panel-title">钢筋显示控制面板</div>
      <div class="panel-list">
        <div v-for="p in panelRows" :key="p" class="panel-row">
          <svg width="11" height="11" viewBox="0 0 11 11"><rect x=".5" y=".5" width="10" height="10" fill="#fff" stroke="#888" /><path d="M2.500 5.500l2 2 4-4" fill="none" stroke="#333" /></svg>
          <span>{{ p }}</span>
        </div>
      </div>
    </div>
  </div>
</template>

<style scoped>
.app {
  position: relative;
  width: 1366px;
  height: 768px;
  overflow: hidden;
  display: flex;
  flex-direction: column;
  background: #f0f0f0;
  color: #1a1a1a;
  font: 12px/1 "Noto Sans", "Noto Sans CJK SC", "Liberation Sans", sans-serif;
}
.title {
  height: 23px;
  flex: none;
  display: flex;
  align-items: center;
  background: #fff;
  white-space: nowrap;
}
.title-txt { font-size: 12.55px; }
.logo { width: 16px; height: 16px; margin: 0 5px 0 2px; }
.winbtns { margin-left: auto; display: flex; margin-right: 7px; }
.winbtns svg { width: 46px; height: 23px; }

.main { flex: none; height: 623px; display: flex; }

.side { width: 163px; flex: none; display: flex; flex-direction: column; }
.side-head {
  height: 15px;
  margin-bottom: 1px;
  background: #0051dc;
  color: #fff;
  font: 13px/15px "Noto Sans CJK SC", sans-serif;
  display: flex;
  align-items: center;
  justify-content: space-between;
}
.side-head svg { width: 26px; height: 15px; margin-right: 1px; }
.side-btn {
  height: 22px;
  flex: none;
  display: flex;
  align-items: center;
  justify-content: center;
  padding-top: 2px;
  background: #f0f0f0;
  border: 1px solid #b4b4b4;
  border-width: 1px 1px 1px 0;
  box-sizing: border-box;
  font-size: 12px;
}
.side-btn.gap { margin-top: 3px; }
.tree {
  height: 514px;
  flex: none;
  margin: 0 0 0 2px;
  background: #fff;
  border: 1px solid #999;
  box-sizing: border-box;
  display: flex;
  flex-direction: column;
}
.tree-tools { height: 28px; flex: none; padding: 4px 0 0 4px; box-sizing: border-box; }
.tree-tools svg { width: 40px; height: 18px; display: block; }
.tree-body { flex: 1; display: flex; min-height: 0; }
.tree-list { width: 141px; flex: none; overflow: hidden; }
.node {
  position: relative;
  height: 16px;
  display: flex;
  align-items: center;
  font-family: "Liberation Serif", "Noto Sans CJK SC", serif;
  white-space: nowrap;
}
.node.l1 { padding-left: 8px; }
.node.l2 { padding-left: 40px; }
.node.l2::before {
  content: "";
  position: absolute;
  left: 12px;
  top: 0;
  height: 16px;
  border-left: 1px dotted #555;
}
.node.l2::after {
  content: "";
  position: absolute;
  left: 31px;
  top: 0;
  width: 9px;
  height: 8px;
  border-left: 1px dotted #555;
  border-bottom: 1px dotted #555;
}
.chev { width: 10px; height: 10px; margin-right: 7px; }
.node-in { display: flex; align-items: center; height: 16px; padding-right: 4px; }
.node-in.sel { background: #d4d4d4; margin-left: -3px; padding-left: 3px; }
.node-ic { width: 15px; height: 15px; flex: none; }
.node-txt { margin-left: 6px; }
.node.l1 .node-txt { font-family: "Noto Sans CJK SC", sans-serif; }
.tree-scroll {
  width: 16px;
  flex: none;
  margin-left: 0;
  background: #f0f0f0;
  display: flex;
  flex-direction: column;
  position: relative;
}
.tree-scroll svg { width: 16px; height: 12px; flex: none; margin-top: 3px; }
.tree-scroll svg.down { position: absolute; bottom: 1px; }
.tree-thumb { height: 365px; margin-top: 24px; background: #cdcdcd; }

.work { width: 1203px; flex: none; display: flex; flex-direction: column; }
.scene { width: 1198px; height: 166px; margin-left: 5px; flex: none; display: block; }
.scene-t { font: bold 13px "Liberation Sans", sans-serif; fill: #c8c8c8; }
.scene-n { font: 16px "DejaVu Sans", sans-serif; fill: #cfcfcf; }

.lower { flex: 1; display: flex; min-height: 0; padding-left: 5px; }
.dots {
  width: 13px;
  flex: none;
  background-color: #f0f0f0;
  background-image: radial-gradient(#b0b0b0 1px, transparent 1.200px);
  background-size: 4px 4px;
  background-position: 3px 0;
  background-repeat: repeat;
}
.frame {
  width: 1185px;
  flex: none;
  height: 312px;
  margin-top: 2px;
  box-sizing: border-box;
  border: 1px solid #b4b4b4;
  border-width: 1px 0 2px 1px;
  background: #fff;
  display: flex;
  flex-direction: column;
  overflow: hidden;
}
.table {
  position: relative;
  height: 294px;
  flex: none;
  display: grid;
  grid-template-columns: 32px 73px 57px 35px 34px 200px 167px 155px 62px 38px 38px 49px 62px 60px 72px 74px;
  grid-template-rows: 19px 33px 34px 34px 34px 29px 19px;
  align-content: start;
  font-family: "Liberation Serif", "Noto Sans CJK SC", serif;
  color: #111;
}
.cell {
  box-sizing: border-box;
  border-right: 1px solid #bcbcbc;
  border-bottom: 1px solid #bcbcbc;
  padding-left: 3px;
  display: flex;
  align-items: center;
  white-space: nowrap;
  overflow: hidden;
}
.cell.g { background: #ccffd6; }
.cell.cjk { font-family: "Noto Sans CJK SC", sans-serif; }
.cell.mid { justify-content: center; padding-left: 0; }
.cell.line { border-left: 1px solid #000; }
.cell.picked { background: #aeeada; }
.cell.head {
  padding-left: 0;
  justify-content: center;
  background: linear-gradient(#fff, #ececec);
}
.cell.head.hot { background: linear-gradient(#fbdca8, #f6c67e); color: #5a0a78; }
.cell.rowno { font-size: 13px; }
.cell.rowno.cur { background: #fdd28c; color: #5a0a78; }
.shapes {
  position: absolute;
  left: 231px;
  top: 19px;
  width: 200px;
  height: 183px;
  overflow: visible;
}
.fig-t { font: 12px "Liberation Serif", serif; fill: #111; }
.fig-t.red { fill: #f00; }
.mark { position: absolute; border: 3px solid #f00; box-sizing: border-box; }
.m1 { left: 90px; top: 86px; width: 47px; height: 121px; }
.m2 { left: 249px; top: 87px; width: 175px; height: 133px; }
.dot-red { position: absolute; left: 225px; top: 82px; width: 8px; height: 6px; background: #f00; }
.hscroll { height: 15px; flex: none; display: flex; background: #f0f0f0; }
.sc-arrow { width: 18px; height: 15px; flex: none; }
.sc-arrow.end { margin-left: auto; margin-right: 2px; }
.sc-thumb { width: 824px; background: #cdcdcd; }

.status { height: 21px; flex: none; display: flex; gap: 2px; font-family: "Liberation Serif", "Noto Sans CJK SC", serif; }
.st {
  box-sizing: border-box;
  flex: none;
  background: linear-gradient(#fff, #efefef);
  border: 1px solid #d8d8d8;
  padding-left: 2px;
  display: flex;
  align-items: center;
  white-space: nowrap;
}

.taskbar { height: 40px; flex: none; display: flex; background: #000c12; color: #ddd; }
.start { width: 48px; display: flex; align-items: center; justify-content: center; background: #00080c; }
.search {
  width: 344px;
  box-sizing: border-box;
  background: #333;
  display: flex;
  align-items: center;
  padding-left: 9px;
  color: #888;
  font-size: 14px;
}
.cortana { width: 15px; height: 15px; border: 3px solid #e8e8e8; border-radius: 50%; margin-right: 6px; }
.mic { margin-left: auto; margin-right: 14px; }
.apps { display: flex; margin-left: 2px; }
.tk { width: 49px; display: flex; align-items: center; justify-content: center; box-sizing: border-box; }
.tk.run { border-bottom: 2px solid #76b9ed; padding-top: 2px; }
.tk.act { background: #3a4146; }
.tray { display: flex; align-items: center; margin-left: 85px; }
.cpu, .clock { display: flex; flex-direction: column; align-items: center; gap: 7px; }
.cpu { width: 60px; margin-right: 7px; font-size: 13px; }
.tr { flex: none; }
.ying { width: 22px; text-align: center; font-size: 14px; color: #eee; margin-left: 2px; }
.clock { width: 92px; font-size: 13px; margin-left: 4px; }
.notif { position: relative; margin-left: 3px; width: 30px; display: flex; justify-content: center; }
.notif b {
  position: absolute;
  left: 16px;
  top: 8px;
  width: 15px;
  height: 15px;
  border-radius: 50%;
  background: #333;
  text-align: center;
  font: 11px/15px "Liberation Sans", sans-serif;
  color: #fff;
}

.badge {
  position: absolute;
  left: 1108px;
  top: -26px;
  width: 44px;
  height: 44px;
  border-radius: 50%;
  background: #3cae3c;
  border: 1px solid #cfd8cf;
  box-shadow: 0 0 0 2px #a8b8a8;
  color: #fff;
  font-size: 12px;
  display: flex;
  align-items: flex-end;
  justify-content: center;
  padding-bottom: 5px;
  box-sizing: border-box;
}

.sogou {
  position: absolute;
  left: 940px;
  top: 19px;
  width: 172px;
  height: 24px;
  background: #f4f8fc;
  border: 1px solid #c8d8e8;
  box-sizing: border-box;
  display: flex;
  align-items: center;
}
.sg-s { position: absolute; left: -13px; top: -3px; width: 28px; height: 28px; }
.sg-y { margin-left: 23px; font-size: 14px; color: #1d6fc4; }
.sg-ic { width: 150px; height: 20px; margin-left: 0; }

.panel {
  position: absolute;
  left: 177px;
  top: 171px;
  width: 167px;
  height: 176px;
  box-sizing: border-box;
  background: #fff;
  border: 1px solid #777;
  box-shadow: 2px 2px 2px #555;
}
.panel-title { height: 30px; line-height: 29px; padding-left: 8px; color: #aaa; }
.panel-list {
  margin: 0 1px;
  height: 143px;
  box-sizing: border-box;
  border: 1px solid #888;
  padding-top: 2px;
}
.panel-row { height: 12px; display: flex; align-items: center; padding-left: 3px; gap: 3px; line-height: 12px; white-space: nowrap; }
.panel-row svg { flex: none; }
</style>

<style>
html, body { margin: 0; background: #f0f0f0; }
.tb-row { display: flex; flex: none; box-sizing: border-box; white-space: nowrap; }
.tb-band {
  display: flex;
  flex: none;
  box-sizing: border-box;
  height: 100%;
  align-items: stretch;
  background: linear-gradient(#fcfcfc, #f0f0f0);
}
.tb-band.dots {
  background-image: radial-gradient(#b0b0b0 1px, transparent 1.200px);
  background-size: 4px 4px;
  background-color: #f0f0f0;
}
.r-menu { height: 27px; padding-top: 2px; background: #f5f5f5; }
.r-menu .tb-band { background: none; }
.r-1 { height: 34px; padding: 4px 0; }
.r-2 { height: 27px; padding: 2px 0 1px; }
.r-3 { height: 28px; padding: 2px 0 2px; }
.r-4 { height: 27px; padding: 2px 0 0; }
.r-snap { height: 28px; padding: 2px 0 1px; }
.r-grid { height: 31px; padding-top: 6px; }
.r-grid .tb-band { background: linear-gradient(#fff, #f6f6f6); }
.r-grid .tb-band.dots { background: #f0f0f0; background-image: radial-gradient(#b0b0b0 1px, transparent 1.200px); background-size: 4px 4px; }
.tb-item {
  display: flex;
  align-items: center;
  flex: none;
  box-sizing: border-box;
  overflow: visible;
}
.tb-item.off { color: #a6a6a6; }
.tb-item.dim { color: #777; }
.tb-item.on {
  background: #e4eef8;
  border: 1px solid #2a83d0;
  padding-left: 3px;
}
.tb-ic { width: 15px; height: 15px; flex: none; }
.tb-txt { margin-left: 5px; }
.tb-item > .tb-txt:first-child { margin-left: 0; }
.tb-cell { display: flex; align-items: center; flex: none; }
.tb-tri {
  width: 0;
  height: 0;
  border: 3px solid transparent;
  border-top: 3px solid #222;
  border-bottom: 0;
  display: block;
}
.tb-sep { display: block; width: 1px; height: 18px; background: #bdbdbd; }
.tb-grip {
  display: block;
  width: 2px;
  height: 17px;
  background: repeating-linear-gradient(#aaa 0 2px, transparent 2px 4px);
}
.tb-more { flex: none; font: bold 13px/16px "Liberation Sans", sans-serif; color: #222; }
.tb-sel {
  display: flex;
  align-items: center;
  justify-content: space-between;
  flex: none;
  box-sizing: border-box;
  padding: 0 3px;
  background: #fff;
  font-size: 12px;
}
.tb-inp {
  display: flex;
  align-items: center;
  justify-content: flex-end;
  box-sizing: border-box;
  width: calc(100% - 2px);
  height: 22px;
  background: #fff;
  border: 1px solid #888;
  color: #777;
  font-size: 13px;
}
.tb-spin { display: flex; flex-direction: column; gap: 6px; margin: 0 4px 0 6px; }
.tb-spin i { display: block; width: 0; height: 0; border: 3px solid transparent; border-bottom: 3px solid #555; border-top: 0; }
.tb-spin i + i { border-top: 3px solid #555; border-bottom: 0; }
.tb-chk { display: block; width: 11px; height: 11px; box-sizing: border-box; border: 1px solid #777; background: #fff; }
</style>
